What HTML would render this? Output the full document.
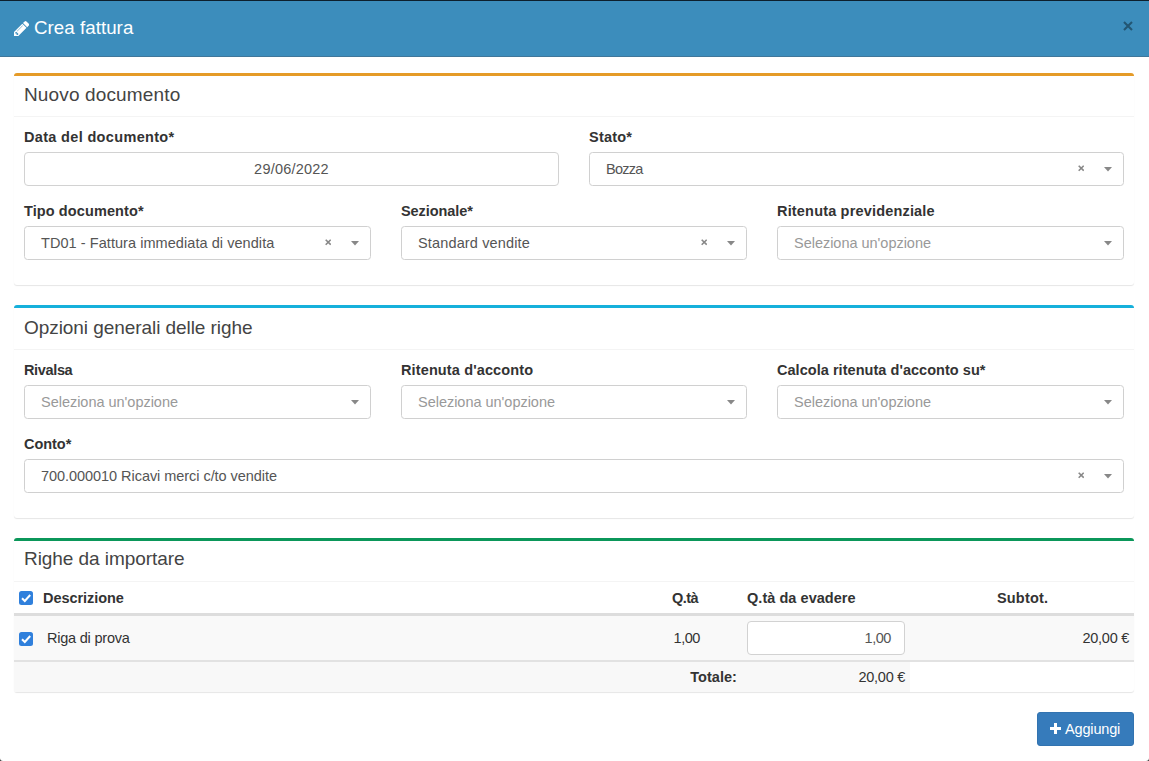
<!DOCTYPE html><html><head><meta charset="utf-8"><style>
html,body{margin:0;padding:0;}
body{width:1149px;height:761px;position:relative;overflow:hidden;background:#3a3a3a;font-family:"Liberation Sans",sans-serif;}
.modal{position:absolute;left:0;top:0;width:1149px;height:761px;background:#fff;border-radius:0 0 3px 3px;}
.t{position:absolute;white-space:nowrap;line-height:1;}
</style></head><body><div class="modal"></div>
<div style="position:absolute;left:0px;top:0px;width:1149px;height:1px;background:#0d1f2d;"></div>
<div style="position:absolute;left:0px;top:1px;width:1149px;height:56px;background:#3c8dbc;"></div>
<div style="position:absolute;left:0px;top:56px;width:1149px;height:1px;background:#40779a;"></div>
<svg style="position:absolute;left:14px;top:21px" width="15.2" height="15.2" viewBox="128 149 1515 1515"><path d="M491 1536l91-91-235-235-91 91v107h128v128h107zm523-928q0-22-22-22-10 0-17 7l-542 542q-7 7-7 17 0 22 22 22 10 0 17-7l542-542q7-7 7-17zm-54-192l416 416-832 832h-416v-416zm683 96q0 53-37 90l-166 166-416-416 166-165q36-38 90-38 53 0 91 38l235 234q37 39 37 91z" fill="#fff"/></svg>
<div class="t" style="left:34px;top:18.97px;font-size:18.7px;color:#fff;letter-spacing:0.055px;">Crea fattura</div>
<svg style="position:absolute;left:1123px;top:20.6px" width="10" height="10" viewBox="0 0 10 10"><path d="M1 1L9 9M9 1L1 9" stroke="#235673" stroke-width="2.1"/></svg>
<div style="position:absolute;left:14px;top:73px;width:1120px;height:212px;border-top:3px solid #e59b28;border-radius:3px;background:#fff;box-shadow:0 1px 1px rgba(0,0,0,0.1);box-sizing:border-box;"></div>
<div style="position:absolute;left:14px;top:116px;width:1120px;height:1px;background:#f4f4f4;"></div>
<div class="t" style="left:24px;top:84.72px;font-size:19px;color:#444;letter-spacing:0.143px;">Nuovo documento</div>
<div class="t" style="left:24px;top:130.23px;font-size:14.5px;color:#333;font-weight:bold;letter-spacing:0.333px;">Data del documento*</div>
<div class="t" style="left:589px;top:130.23px;font-size:14.5px;color:#333;font-weight:bold;letter-spacing:0.22px;">Stato*</div>
<div style="position:absolute;left:24px;top:152px;width:535px;height:34px;border:1px solid #d2d2d2;border-radius:4px;box-sizing:border-box;"></div>
<div class="t" style="left:24px;width:535px;text-align:center;top:161.73px;font-size:14.5px;color:#555;letter-spacing:0.222px;">29/06/2022</div>
<div style="position:absolute;left:589px;top:152px;width:535px;height:34px;border:1px solid #d0d0d0;border-radius:3.5px;box-sizing:border-box;background:#fff;"></div>
<div class="t" style="left:606px;top:161.73px;font-size:14.5px;color:#555;letter-spacing:-0.775px;">Bozza</div>
<svg style="position:absolute;left:1077.8px;top:165.3px" width="6.4" height="6.4" viewBox="0 0 6.4 6.4"><path d="M0.7 0.7L5.7 5.7M5.7 0.7L0.7 5.7" stroke="#888" stroke-width="1.6"/></svg>
<svg style="position:absolute;left:1104px;top:166.5px" width="8" height="5" viewBox="0 0 8 5"><path d="M0 0H8L4 4.5Z" fill="#888"/></svg>
<div class="t" style="left:24px;top:203.73px;font-size:14.5px;color:#333;font-weight:bold;letter-spacing:0.1px;">Tipo documento*</div>
<div class="t" style="left:401px;top:203.73px;font-size:14.5px;color:#333;font-weight:bold;letter-spacing:-0.078px;">Sezionale*</div>
<div class="t" style="left:777px;top:203.73px;font-size:14.5px;color:#333;font-weight:bold;letter-spacing:0.176px;">Ritenuta previdenziale</div>
<div style="position:absolute;left:24px;top:226px;width:347px;height:34px;border:1px solid #d0d0d0;border-radius:3.5px;box-sizing:border-box;background:#fff;"></div>
<div class="t" style="left:41px;top:235.73px;font-size:14.5px;color:#555;letter-spacing:0.059px;">TD01 - Fattura immediata di vendita</div>
<svg style="position:absolute;left:324.8px;top:239.3px" width="6.4" height="6.4" viewBox="0 0 6.4 6.4"><path d="M0.7 0.7L5.7 5.7M5.7 0.7L0.7 5.7" stroke="#888" stroke-width="1.6"/></svg>
<svg style="position:absolute;left:351px;top:240.5px" width="8" height="5" viewBox="0 0 8 5"><path d="M0 0H8L4 4.5Z" fill="#888"/></svg>
<div style="position:absolute;left:401px;top:226px;width:346px;height:34px;border:1px solid #d0d0d0;border-radius:3.5px;box-sizing:border-box;background:#fff;"></div>
<div class="t" style="left:418px;top:235.73px;font-size:14.5px;color:#555;letter-spacing:0.147px;">Standard vendite</div>
<svg style="position:absolute;left:700.8px;top:239.3px" width="6.4" height="6.4" viewBox="0 0 6.4 6.4"><path d="M0.7 0.7L5.7 5.7M5.7 0.7L0.7 5.7" stroke="#888" stroke-width="1.6"/></svg>
<svg style="position:absolute;left:727px;top:240.5px" width="8" height="5" viewBox="0 0 8 5"><path d="M0 0H8L4 4.5Z" fill="#888"/></svg>
<div style="position:absolute;left:777px;top:226px;width:347px;height:34px;border:1px solid #d0d0d0;border-radius:3.5px;box-sizing:border-box;background:#fff;"></div>
<div class="t" style="left:794px;top:235.73px;font-size:14.5px;color:#999;letter-spacing:-0.021px;">Seleziona un'opzione</div>
<svg style="position:absolute;left:1104px;top:240.5px" width="8" height="5" viewBox="0 0 8 5"><path d="M0 0H8L4 4.5Z" fill="#888"/></svg>
<div style="position:absolute;left:14px;top:305px;width:1120px;height:213px;border-top:3px solid #16b0db;border-radius:3px;background:#fff;box-shadow:0 1px 1px rgba(0,0,0,0.1);box-sizing:border-box;"></div>
<div style="position:absolute;left:14px;top:349px;width:1120px;height:1px;background:#f4f4f4;"></div>
<div class="t" style="left:24px;top:318.12px;font-size:19px;color:#444;letter-spacing:-0.063px;">Opzioni generali delle righe</div>
<div class="t" style="left:24px;top:362.73px;font-size:14.5px;color:#333;font-weight:bold;letter-spacing:-0.35px;">Rivalsa</div>
<div class="t" style="left:401px;top:362.73px;font-size:14.5px;color:#333;font-weight:bold;letter-spacing:0.124px;">Ritenuta d'acconto</div>
<div class="t" style="left:777px;top:362.73px;font-size:14.5px;color:#333;font-weight:bold;letter-spacing:0.041px;">Calcola ritenuta d'acconto su*</div>
<div style="position:absolute;left:24px;top:385px;width:347px;height:34px;border:1px solid #d0d0d0;border-radius:3.5px;box-sizing:border-box;background:#fff;"></div>
<div class="t" style="left:41px;top:394.73px;font-size:14.5px;color:#999;letter-spacing:-0.021px;">Seleziona un'opzione</div>
<svg style="position:absolute;left:351px;top:399.5px" width="8" height="5" viewBox="0 0 8 5"><path d="M0 0H8L4 4.5Z" fill="#888"/></svg>
<div style="position:absolute;left:401px;top:385px;width:346px;height:34px;border:1px solid #d0d0d0;border-radius:3.5px;box-sizing:border-box;background:#fff;"></div>
<div class="t" style="left:418px;top:394.73px;font-size:14.5px;color:#999;letter-spacing:-0.021px;">Seleziona un'opzione</div>
<svg style="position:absolute;left:727px;top:399.5px" width="8" height="5" viewBox="0 0 8 5"><path d="M0 0H8L4 4.5Z" fill="#888"/></svg>
<div style="position:absolute;left:777px;top:385px;width:347px;height:34px;border:1px solid #d0d0d0;border-radius:3.5px;box-sizing:border-box;background:#fff;"></div>
<div class="t" style="left:794px;top:394.73px;font-size:14.5px;color:#999;letter-spacing:-0.021px;">Seleziona un'opzione</div>
<svg style="position:absolute;left:1104px;top:399.5px" width="8" height="5" viewBox="0 0 8 5"><path d="M0 0H8L4 4.5Z" fill="#888"/></svg>
<div class="t" style="left:24px;top:436.73px;font-size:14.5px;color:#333;font-weight:bold;letter-spacing:-0.04px;">Conto*</div>
<div style="position:absolute;left:24px;top:459px;width:1100px;height:34px;border:1px solid #d0d0d0;border-radius:3.5px;box-sizing:border-box;background:#fff;"></div>
<div class="t" style="left:41px;top:468.73px;font-size:14.5px;color:#555;letter-spacing:-0.049px;">700.000010 Ricavi merci c/to vendite</div>
<svg style="position:absolute;left:1077.8px;top:472.3px" width="6.4" height="6.4" viewBox="0 0 6.4 6.4"><path d="M0.7 0.7L5.7 5.7M5.7 0.7L0.7 5.7" stroke="#888" stroke-width="1.6"/></svg>
<svg style="position:absolute;left:1104px;top:473.5px" width="8" height="5" viewBox="0 0 8 5"><path d="M0 0H8L4 4.5Z" fill="#888"/></svg>
<div style="position:absolute;left:14px;top:538px;width:1120px;height:154px;border-top:3px solid #0b975a;border-radius:3px;background:#fff;box-shadow:0 1px 1px rgba(0,0,0,0.1);box-sizing:border-box;"></div>
<div style="position:absolute;left:14px;top:581px;width:1120px;height:1px;background:#f4f4f4;"></div>
<div class="t" style="left:24px;top:549.42px;font-size:19px;color:#444;letter-spacing:-0.065px;">Righe da importare</div>
<div style="position:absolute;left:19px;top:591px;width:14px;height:14px;border-radius:2.5px;background:#3080dc;"></div><svg style="position:absolute;left:19px;top:591px" width="14" height="14" viewBox="0 0 14 14"><path d="M3 7.2L5.8 10L11.2 4" stroke="#fff" stroke-width="2" fill="none"/></svg>
<div class="t" style="left:43px;top:590.73px;font-size:14.5px;color:#333;font-weight:bold;letter-spacing:-0.06px;">Descrizione</div>
<div class="t" style="left:672px;top:590.73px;font-size:14.5px;color:#333;font-weight:bold;letter-spacing:-0.533px;">Q.tà</div>
<div class="t" style="left:747px;top:590.73px;font-size:14.5px;color:#333;font-weight:bold;letter-spacing:0.043px;">Q.tà da evadere</div>
<div class="t" style="left:997px;top:590.73px;font-size:14.5px;color:#333;font-weight:bold;letter-spacing:0.167px;">Subtot.</div>
<div style="position:absolute;left:14px;top:613px;width:1120px;height:3px;background:#ddd;"></div>
<div style="position:absolute;left:14px;top:616px;width:1120px;height:44px;background:#f9f9f9;"></div>
<div style="position:absolute;left:14px;top:660px;width:1120px;height:2px;background:#e2e2e2;"></div>
<div style="position:absolute;left:19px;top:632px;width:14px;height:14px;border-radius:2.5px;background:#3080dc;"></div><svg style="position:absolute;left:19px;top:632px" width="14" height="14" viewBox="0 0 14 14"><path d="M3 7.2L5.8 10L11.2 4" stroke="#fff" stroke-width="2" fill="none"/></svg>
<div class="t" style="left:47px;top:630.73px;font-size:14.5px;color:#333;letter-spacing:-0.217px;">Riga di prova</div>
<div class="t" style="right:449px;top:630.73px;font-size:14.5px;color:#333;letter-spacing:-0.433px;">1,00</div>
<div style="position:absolute;left:747px;top:621px;width:158px;height:34px;border:1px solid #d2d2d2;border-radius:4px;box-sizing:border-box;background:#fff;"></div>
<div class="t" style="right:258px;top:630.73px;font-size:14.5px;color:#555;letter-spacing:-0.433px;">1,00</div>
<div class="t" style="right:20px;top:630.73px;font-size:14.5px;color:#333;letter-spacing:-0.267px;">20,00 €</div>
<div style="position:absolute;left:14px;top:662px;width:896px;height:30px;background:#f8f8f8;"></div>
<div class="t" style="right:412px;top:669.73px;font-size:14.5px;color:#333;font-weight:bold;letter-spacing:0.05px;">Totale:</div>
<div class="t" style="right:244px;top:669.73px;font-size:14.5px;color:#333;letter-spacing:-0.267px;">20,00 €</div>
<div style="position:absolute;left:1037px;top:712px;width:97px;height:34px;background:#367bbb;border:1px solid #3273b0;border-radius:3px;box-sizing:border-box;"></div>
<svg style="position:absolute;left:1050px;top:723px" width="11" height="11" viewBox="0 0 11 11"><path d="M4 0H7V4H11V7H7V11H4V7H0V4H4Z" fill="#fff"/></svg>
<div class="t" style="left:1065px;top:722.23px;font-size:14.5px;color:#fff;letter-spacing:-0.157px;">Aggiungi</div>
</body></html>
